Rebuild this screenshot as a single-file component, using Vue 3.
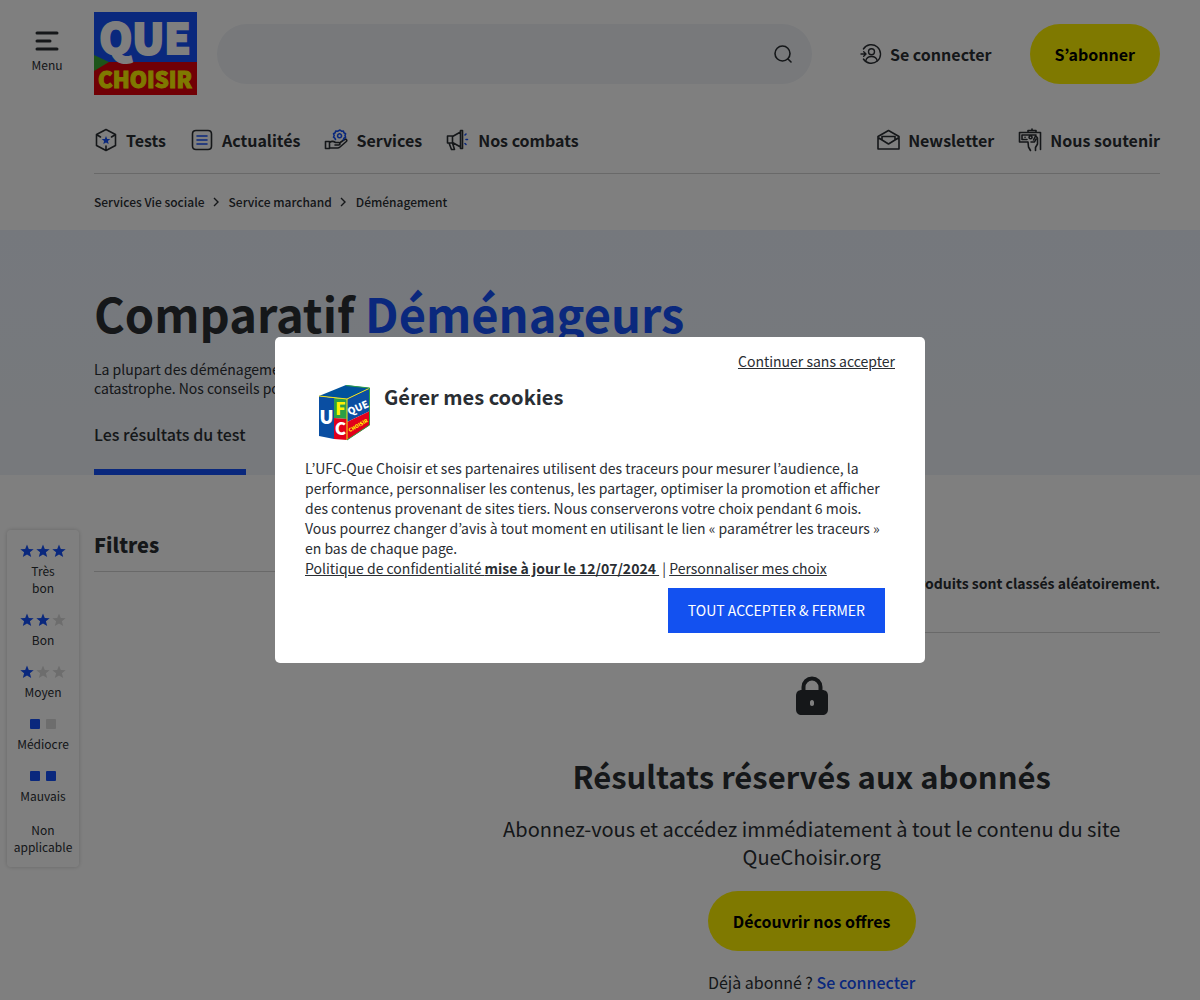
<template>
  <div class="page">
    <header class="header">
      <div class="header-top">
        <button type="button" class="menu-button">
          <svg width="24" height="20" viewBox="0 0 24 20" fill="none" stroke="#2a2e33" stroke-width="3" stroke-linecap="round">
            <path d="M2 2h20M2 10h13M2 18h20" />
          </svg>
          <span>Menu</span>
        </button>
        <a href="#" class="logo" aria-label="Que Choisir">
          <svg width="103" height="83" viewBox="0 0 103 83">
            <path fill="#1450fa" d="M0 0h103v51H0z" />
            <path fill="#e3000b" d="M0 50h103v33H0z" />
            <path fill="#3aaa35" d="M0 43l15 7L0 59z" />
            <text x="51" y="42" text-anchor="middle" class="logo-text" font-size="42" fill="#fff" stroke="#fff" stroke-width="2">QUE</text>
            <text x="51" y="76" text-anchor="middle" class="logo-text" font-size="22" fill="#fff200" stroke="#fff200">CHOISIR</text>
          </svg>
        </a>
        <form class="search" @submit.prevent>
          <input v-model="search" type="search" aria-label="Rechercher" />
          <button type="submit" aria-label="Lancer la recherche">
            <svg width="20" height="20" viewBox="0 0 20 20" fill="none" stroke="#2a2e33" stroke-width="1.6" stroke-linecap="round">
              <circle cx="9.500" cy="9.500" r="7.500" />
              <path d="M15 15l3 3" />
            </svg>
          </button>
        </form>
        <a href="#" class="login">
          <svg width="22" height="22" viewBox="0 0 22 22" fill="none" stroke="#2a2e33" stroke-width="1.4" stroke-linecap="round" stroke-linejoin="round">
            <path d="M3.400 6A9.300 9.300 0 1 1 3.400 16M1 11h4.500M3.700 8.800L6 11l-2.300 2.200" />
            <circle cx="11.500" cy="8.700" r="3" />
            <path d="M5.800 17.800c.6-3 2.800-4.300 5.700-4.300s5.100 1.300 5.700 4.300" />
          </svg>
          Se connecter
        </a>
        <a href="#" class="pill">S’abonner</a>
      </div>
      <nav class="nav">
        <a v-for="item in navItems" :key="item.label" href="#" :class="['nav-link', { push: item.push }]">
          <svg width="24" height="24" viewBox="0 0 24 24" fill="none" stroke="#2a2e33" stroke-width="1.6" stroke-linecap="round" stroke-linejoin="round">
            <path :d="item.dark" />
            <path v-if="item.blue" :d="item.blue" stroke="#1450fa" :fill="item.filled ? '#1450fa' : 'none'" :stroke-width="item.filled ? 0 : 1.6" />
          </svg>
          {{ item.label }}
        </a>
      </nav>
      <nav class="breadcrumb" aria-label="Fil d’Ariane">
        <template v-for="(crumb, i) in crumbs" :key="crumb">
          <svg v-if="i" width="8" height="10" viewBox="0 0 8 10" fill="none" stroke="#2a2e33" stroke-width="1.4">
            <path d="M1 1l4 4-4 4" />
          </svg>
          <a href="#">{{ crumb }}</a>
        </template>
      </nav>
    </header>

    <section class="hero">
      <h1>Comparatif <span>Déménageurs</span></h1>
      <p>La plupart des déménagements se passent bien, mais certains tournent à la<br />catastrophe. Nos conseils pour bien choisir votre déménageur.</p>
      <a href="#" class="tab">Les résultats du test</a>
    </section>

    <main class="content">
      <aside class="legend">
        <div v-for="row in legend" :key="row.label" class="legend-row">
          <div v-if="row.marks" class="marks">
            <svg v-for="(on, i) in row.marks" :key="i" width="14" height="14" viewBox="0 0 14 14" :fill="on ? '#1450fa' : '#dadada'">
              <path v-if="row.shape === 'star'" d="M7 .5l1.800 4.400 4.900.3-3.800 3.100 1.300 4.800L7 10.500l-4.200 2.600 1.300-4.800L.3 5.200l4.900-.3z" />
              <rect v-else x="2" y="2" width="10" height="10" rx="1" />
            </svg>
          </div>
          <span>{{ row.label }}</span>
        </div>
      </aside>
      <section class="filters">
        <h2>Filtres</h2>
      </section>
      <section class="results">
        <p class="notice">Les produits sont classés aléatoirement.</p>
        <div class="locked">
          <svg width="32" height="40" viewBox="0 0 32 40">
            <path d="M7.500 17v-6a8.500 8.500 0 0 1 17 0v6" fill="none" stroke="#2a2e33" stroke-width="4" />
            <path fill="#2a2e33" fill-rule="evenodd" d="M6 14h20c4 0 6 2 6 6v13c0 4-2 6-6 6H6c-4 0-6-2-6-6V20c0-4 2-6 6-6zm10 10c-1.300 0-2 1-2 2.300v1.400c0 1.300.7 2.300 2 2.300s2-1 2-2.300v-1.400c0-1.300-.7-2.300-2-2.300z" />
          </svg>
          <h2>Résultats réservés aux abonnés</h2>
          <p class="lead">Abonnez-vous et accédez immédiatement à tout le contenu du site QueChoisir.org</p>
          <a href="#" class="pill">Découvrir nos offres</a>
          <p class="member">Déjà abonné ? <a href="#">Se connecter</a></p>
        </div>
      </section>
    </main>

    <div v-if="open" class="overlay">
      <div class="modal" role="dialog" aria-modal="true" aria-labelledby="cookies-title">
        <button type="button" class="skip" @click="open = false">Continuer sans accepter</button>
        <div class="modal-head">
          <svg width="51" height="56" viewBox="0 0 51 56">
            <path fill="#00529c" d="M0 11L27 0l24 3-23 11z" />
            <path fill="#0a4ea2" d="M0 11l15 2v41L0 51z" />
            <path fill="#2c9f45" d="M15 13l13 1v20l-13-1z" />
            <path fill="#e2001a" d="M15 33l13 1v21l-13-1z" />
            <path fill="#0a4ea2" d="M28 14L51 3v23L28 37z" />
            <path fill="#e2001a" d="M28 37l23-11v14L28 55z" />
            <path fill="none" stroke="#f5e216" d="M0 11l28 3v41M28 14L51 3" />
            <path fill="none" stroke="#2c9f45" d="M27 .5L50.500 3v37L28 55" />
            <g class="cube-text" text-anchor="middle">
              <text x="7.500" y="39" font-size="19" fill="#fff">U</text>
              <text x="21.500" y="30" font-size="17" fill="#fff200">F</text>
              <text x="21.500" y="50" font-size="17" fill="#fff">C</text>
              <text transform="translate(40.500 26) rotate(-24)" font-size="10" fill="#fff">QUE</text>
              <text transform="translate(40 42) rotate(-30)" font-size="5" fill="#fff200">CHOISIR</text>
            </g>
          </svg>
          <h2 id="cookies-title">Gérer mes cookies</h2>
        </div>
        <p class="modal-text">
          L’UFC-Que Choisir et ses partenaires utilisent des traceurs pour mesurer l’audience, la performance, personnaliser les contenus, les partager, optimiser la promotion et afficher des contenus provenant de sites tiers. Nous conserverons votre choix pendant 6 mois. Vous pourrez changer d’avis à tout moment en utilisant le lien « paramétrer les traceurs » en bas de chaque page.<br />
          <a href="#">Politique de confidentialité <strong>mise à jour le 12/07/2024&nbsp;</strong></a> | <a href="#">Personnaliser mes choix</a>
        </p>
        <button type="button" class="accept" @click="open = false">TOUT ACCEPTER &amp; FERMER</button>
      </div>
    </div>
  </div>
</template>

<script setup>
import { ref } from 'vue';

const search = ref('');
const open = ref(true);

const navItems = [
  {
    label: 'Tests',
    dark: 'M12 1.500l9.500 5v11l-9.500 5-9.500-5v-11zM2.500 6.500l4 2.500M21.500 6.500l-4 2.500M12 22.500V18',
    blue: 'M12 8l1.200 2.900 3.100.2-2.400 2 .8 3-2.700-1.700-2.700 1.700.8-3-2.400-2 3.100-.2z',
    filled: true
  },
  {
    label: 'Actualités',
    dark: 'M6 2.500h12q3.500 0 3.500 3.500v12q0 3.500-3.500 3.500H6q-3.500 0-3.500-3.500V6q0-3.500 3.500-3.500z',
    blue: 'M7 8h10M7 12h10M7 16h10'
  },
  {
    label: 'Services',
    dark: 'M1.500 13.500h4v7h-4zM5.500 14.500c2-1.500 4-1.500 6 0h3.200c1.800 0 1.800 2.500 0 2.500H11M15.500 15l5-3.500c1.700-1 3 .8 1.800 2l-6.300 5.500c-.8.700-1.500 1-2.500 1h-8',
    blue: 'M16 2l1.500 1.200 1.900-.2.500 1.800 1.700.9-.6 1.800.6 1.800-1.700.9-.5 1.600M11.500 11.500l-.7-1.300-1.300-1 .7-1.700-.7-1.800 1.700-.9.5-1.800 1.900.2L16 2M15.500 5.800a2 2 0 1 0 .1 0'
  },
  {
    label: 'Nos combats',
    dark: 'M1.500 8h5v7h-5zM6.500 8.500l8-4.500v15l-8-4.500M14.500 2.500h2v18h-2zM3 15l2.500 6.500h3L6.500 15',
    blue: 'M19 7l1-1M20 11.500h1.500M19 15.500l1 1'
  },
  {
    label: 'Newsletter',
    push: true,
    dark: 'M2 8.500L12.500 2.500 23 8.500V21H2zM2 9.500L12.500 16 23 9.500M6 11.500v-3h13v3'
  },
  {
    label: 'Nous soutenir',
    dark: 'M9.500 14H1.500V4.500h21v17M4 7h14M4 11.500h5M4 7v4.500M12.500 7.800a1.500 1.500 0 1 0 .1 0M7 9.300h.1M10 4.500V2.500h8v2M14 2.500V1M10 14l.5 5 2 3.500M17.500 22.500v-3l2-3.500V10l-2-2.500M17.500 8l-2 4M13 14h3.500l1.500-3'
  }
];

const crumbs = ['Services Vie sociale', 'Service marchand', 'Déménagement'];

const legend = [
  { label: 'Très\nbon', shape: 'star', marks: [true, true, true] },
  { label: 'Bon', shape: 'star', marks: [true, true, false] },
  { label: 'Moyen', shape: 'star', marks: [true, false, false] },
  { label: 'Médiocre', shape: 'square', marks: [true, false] },
  { label: 'Mauvais', shape: 'square', marks: [true, true] },
  { label: 'Non\napplicable' }
];
</script>

<style>
body {
  background: #fff;
}
</style>

<style scoped>
.page {
  min-height: 100vh;
  max-height: 100vh;
  overflow: hidden;
  background: #fff;
  color: #2a2e33;
  font-family: "Noto Sans CJK KR", "Open Sans", sans-serif;
  font-size: 16px;
  line-height: 20px;
}
.page * {
  box-sizing: border-box;
}
h1, h2, p {
  margin: 0;
}
a {
  color: inherit;
  text-decoration: none;
}
button {
  font: inherit;
  color: inherit;
  border: none;
  background: none;
  padding: 0;
  cursor: pointer;
}
svg {
  display: block;
  flex: none;
}
.header {
  padding: 0 40px 0 94px;
}
.header-top {
  display: flex;
  align-items: center;
  height: 107px;
  margin-left: -94px;
}
.menu-button {
  width: 94px;
  display: flex;
  flex-direction: column;
  align-items: center;
  gap: 4px;
  padding-bottom: 2px;
  font-size: 12px;
}
.logo-text, .cube-text {
  font-family: "Noto Sans CJK KR", sans-serif;
  font-weight: 900;
}
.search {
  flex: 1;
  display: flex;
  align-items: center;
  height: 60px;
  margin-left: 20px;
  padding: 0 19px 0 24px;
  border-radius: 30px;
  background: #f0f3f7;
}
.search input {
  flex: 1;
  min-width: 0;
  border: none;
  outline: none;
  background: transparent;
  font: inherit;
}
.login {
  display: flex;
  align-items: center;
  gap: 8px;
  margin: 0 38px 0 48px;
  font-weight: 600;
}
.pill {
  display: inline-flex;
  align-items: center;
  height: 60px;
  padding: 0 25px;
  border-radius: 30px;
  background: #fff200;
  color: #000;
  font-weight: 600;
}
.nav {
  display: flex;
  align-items: center;
  gap: 24px;
  height: 67px;
  border-bottom: 1px solid #d2d2d2;
}
.nav-link {
  display: flex;
  align-items: center;
  gap: 8px;
  font-weight: 600;
}
.push {
  margin-left: auto;
}
.breadcrumb {
  display: flex;
  align-items: center;
  gap: 8px;
  height: 56px;
  font-size: 12px;
  font-weight: 500;
}
.hero {
  padding: 53px 40px 0 94px;
  background: linear-gradient(#ebf1fb, #eff3f8);
}
.hero h1 {
  font-size: 47px;
  line-height: 60px;
  font-weight: 600;
}
.hero h1 span {
  color: #1450fa;
}
.hero p {
  margin-top: 17px;
  font-size: 14px;
  line-height: 19px;
}
.tab {
  display: block;
  width: fit-content;
  margin-top: 26px;
  padding-bottom: 25px;
  border-bottom: 6px solid #1450fa;
  font-weight: 500;
}
.content {
  display: grid;
  grid-template-columns: 72px minmax(0, 1fr) minmax(0, 2fr);
  align-items: start;
  padding: 55px 40px 0 7px;
}
.legend {
  display: flex;
  flex-direction: column;
  gap: 17px;
  padding: 14px 4px 12px;
  border-radius: 4px;
  box-shadow: 0 0 4px rgba(0, 0, 0, 0.2);
  font-size: 12px;
  line-height: 17px;
  text-align: center;
  white-space: pre-line;
}
.legend-row {
  display: flex;
  flex-direction: column;
  align-items: center;
  gap: 4px;
}
.marks {
  display: flex;
  gap: 2px;
}
.filters {
  margin-left: 15px;
}
.filters h2 {
  padding-bottom: 11px;
  border-bottom: 1px solid #d2d2d2;
  font-size: 20px;
  line-height: 30px;
  font-weight: 900;
}
.results {
  margin-left: 24px;
}
.notice {
  padding: 43px 0 39px;
  border-bottom: 1px solid #d2d2d2;
  font-size: 14px;
  font-weight: 600;
  text-align: right;
}
.locked {
  display: flex;
  flex-direction: column;
  align-items: center;
  padding-top: 43px;
  text-align: center;
}
.locked h2 {
  margin-top: 38px;
  font-size: 31px;
  line-height: 44px;
}
.lead {
  margin: 17px 0 20px;
  font-size: 20px;
  line-height: 28px;
}
.member {
  margin-top: 21px;
}
.member a {
  color: #1450fa;
  font-weight: 500;
}
.overlay {
  position: fixed;
  inset: 0;
  display: flex;
  align-items: center;
  justify-content: center;
  background: rgba(0, 0, 0, 0.5);
}
.modal {
  display: flex;
  flex-direction: column;
  width: 650px;
  padding: 14px 30px 30px;
  border-radius: 5px;
  background: #fff;
  font-size: 14px;
}
.skip {
  align-self: flex-end;
  text-decoration: underline;
}
.modal-head {
  display: flex;
  gap: 14px;
  margin: 14px 0 17px 14px;
}
.modal-head h2 {
  font-size: 20px;
  line-height: 24px;
  font-weight: 600;
}
.modal-text a {
  text-decoration: underline;
}
.accept {
  align-self: flex-end;
  height: 45px;
  margin: 10px 10px 0 0;
  padding: 0 20px 2px;
  background: #1351f0;
  color: #fff;
}
</style>
